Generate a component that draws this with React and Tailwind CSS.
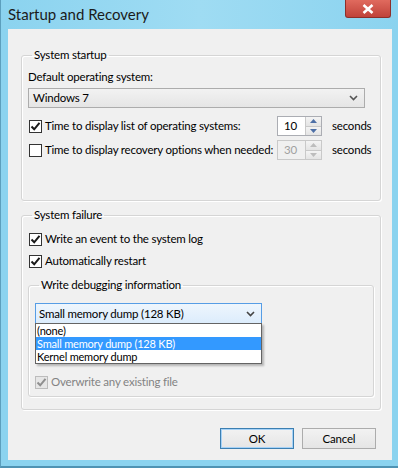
import React from 'react';

const font = "font-['Lato','Noto_Sans',sans-serif]";

const Check = ({ color = '#1a1a1a' }) => (
  <svg width="11" height="11" viewBox="0 0 11 11" className="block">
    <path d="M1.5 5.5 L4.2 8.3 L9.5 1.8" fill="none" stroke={color} strokeWidth="2" />
  </svg>
);

const Checkbox = ({ checked, disabled, label }) => (
  <div className="flex items-center h-[16px] whitespace-nowrap">
    <div
      className={`w-[13px] h-[13px] shrink-0 border flex items-center justify-center ${
        disabled ? 'border-[#bcbcbc] bg-[#e6e6e6]' : 'border-[#333333] bg-white'
      }`}
    >
      {checked && <Check color={disabled ? '#8f8f8f' : '#1a1a1a'} />}
    </div>
    <span className={`ml-[3px] ${disabled ? 'text-[#838383]' : 'text-black'}`}>{label}</span>
  </div>
);

const Chevron = ({ color = '#555' }) => (
  <svg width="9" height="6" viewBox="0 0 9 6">
    <path d="M1 1 L4.5 4.5 L8 1" fill="none" stroke={color} strokeWidth="1.6" />
  </svg>
);

const Arrow = ({ up, color }) => (
  <svg width="7" height="4" viewBox="0 0 7 4">
    <path d={up ? 'M0 4 L3.5 0 L7 4 Z' : 'M0 0 L3.5 4 L7 0 Z'} fill={color} />
  </svg>
);

const Spin = ({ value, disabled }) => (
  <div
    className={`flex w-[45px] h-[20px] border ${
      disabled ? 'border-[#c9c9c9] bg-[#f0f0f0]' : 'border-[#abadb3] bg-white'
    }`}
  >
    <div className={`flex-1 pl-[6px] flex items-center ${disabled ? 'text-[#a0a0a0]' : 'text-black'}`}>
      {value}
    </div>
    <div className="w-[16px] flex flex-col border-l border-[#c9c9c9]">
      <div className="flex-1 flex items-center justify-center bg-gradient-to-b from-[#f4f4f4] to-[#e4e4e4] border-b border-[#c9c9c9]">
        <Arrow up color={disabled ? '#bdbdbd' : '#4d6fa6'} />
      </div>
      <div className="flex-1 flex items-center justify-center bg-gradient-to-b from-[#f4f4f4] to-[#e4e4e4]">
        <Arrow color={disabled ? '#bdbdbd' : '#4d6fa6'} />
      </div>
    </div>
  </div>
);

const Group = ({ title, className = '', children }) => (
  <fieldset
    className={`border border-[#d5d5d5] rounded-[3px] shadow-[inset_1px_1px_0_#fff,1px_1px_0_#fff] ${className}`}
  >
    <legend className="ml-[4px] px-[2px] leading-[16px] whitespace-nowrap">{title}</legend>
    {children}
  </fieldset>
);

const SpinRow = ({ checked, label, value, disabled }) => (
  <div className="flex items-center">
    <div className="w-[249px] pl-[1px]">
      <Checkbox checked={checked} label={label} />
    </div>
    <Spin value={value} disabled={disabled} />
    <span className="ml-[10px]">seconds</span>
  </div>
);

export default function App() {
  return (
    <div className={`w-[398px] h-[468px] bg-[#8bd3ef] border-l border-[#5c9fbd] border-b-2 border-b-[#4f93b3] text-[11.5px] tracking-[-0.2px] leading-[16px] text-black ${font} flex flex-col`}>
      {/* title bar */}
      <div className="h-[29px] flex items-start justify-between bg-gradient-to-r from-[#8bd3ef] via-[#9fdcf3] to-[#8bd3ef]">
        <div className="pl-[7px] pt-[4px] text-[15px] tracking-normal leading-[20px] text-[#1b1b1b]">Startup and Recovery</div>
        <div className="mr-[7px] w-[46px] h-[18px] bg-gradient-to-b from-[#e06a5e] to-[#c0423a] border border-t-0 border-[#8d2f2a] rounded-b-[3px] flex items-center justify-center">
          <svg width="12" height="10" viewBox="0 0 12 10">
            <path d="M1.5 1 L10.5 9 M10.5 1 L1.5 9" stroke="#fff" strokeWidth="2.6" />
          </svg>
        </div>
      </div>

      {/* client area */}
      <div className="ml-[7px] mr-[6px] h-[431px] bg-[#f0f0f0] flex flex-col pl-[13px] pr-[11px]">
        <Group title="System startup" className="mt-[18px] h-[154px] px-[6px]">
          <div className="mt-[6px]">Default operating system:</div>
          <div className="mt-[3px] w-[337px] h-[20px] border border-[#acacac] bg-gradient-to-b from-[#f2f2f2] to-[#e5e5e5] flex items-center justify-between pl-[4px] pr-[6px]">
            <span>Windows 7</span>
            <Chevron />
          </div>
          <div className="mt-[8px]">
            <SpinRow checked label="Time to display list of operating systems:" value="10" />
          </div>
          <div className="mt-[4px]">
            <SpinRow label="Time to display recovery options when needed:" value="30" disabled />
          </div>
        </Group>

        <Group title="System failure" className="mt-[6px] h-[203px] px-[6px]">
          <div className="mt-[8px] pl-[1px]">
            <Checkbox checked label="Write an event to the system log" />
          </div>
          <div className="mt-[6px] pl-[1px]">
            <Checkbox checked label="Automatically restart" />
          </div>
          <Group title="Write debugging information" className="mt-[8px] h-[120px] px-[6px]">
            <div className="relative mt-[10px]">
              <div className="w-[227px] h-[21px] border border-[#569de5] bg-gradient-to-b from-[#eef6fd] to-[#dcecfc] flex items-center justify-between pl-[3px] pr-[6px]">
                <span>Small memory dump (128 KB)</span>
                <Chevron color="#444" />
              </div>
              <div className="absolute left-0 top-[20px] w-[227px] border border-[#646464] bg-white shadow-[2px_2px_2px_rgba(0,0,0,0.25)] text-[11px] leading-[13px] z-10">
                <div className="pl-[1px] h-[13px]">(none)</div>
                <div className="pl-[1px] h-[13px] bg-[#3399ff] text-white">Small memory dump (128 KB)</div>
                <div className="pl-[1px] h-[13px]">Kernel memory dump</div>
              </div>
            </div>
            <div className="mt-[50px]">
              <Checkbox checked disabled label="Overwrite any existing file" />
            </div>
          </Group>
        </Group>

        <div className="mt-[18px] flex justify-end gap-[8px] pr-[5px]">
          <button className="w-[74px] h-[21px] border border-[#3c7fb1] bg-gradient-to-b from-[#f2f2f2] to-[#e5e5e5] shadow-[inset_0_0_0_1px_#a6d2f7]">
            OK
          </button>
          <button className="w-[74px] h-[21px] border border-[#acacac] bg-gradient-to-b from-[#f2f2f2] to-[#e5e5e5]">
            Cancel
          </button>
        </div>
      </div>
    </div>
  );
}
